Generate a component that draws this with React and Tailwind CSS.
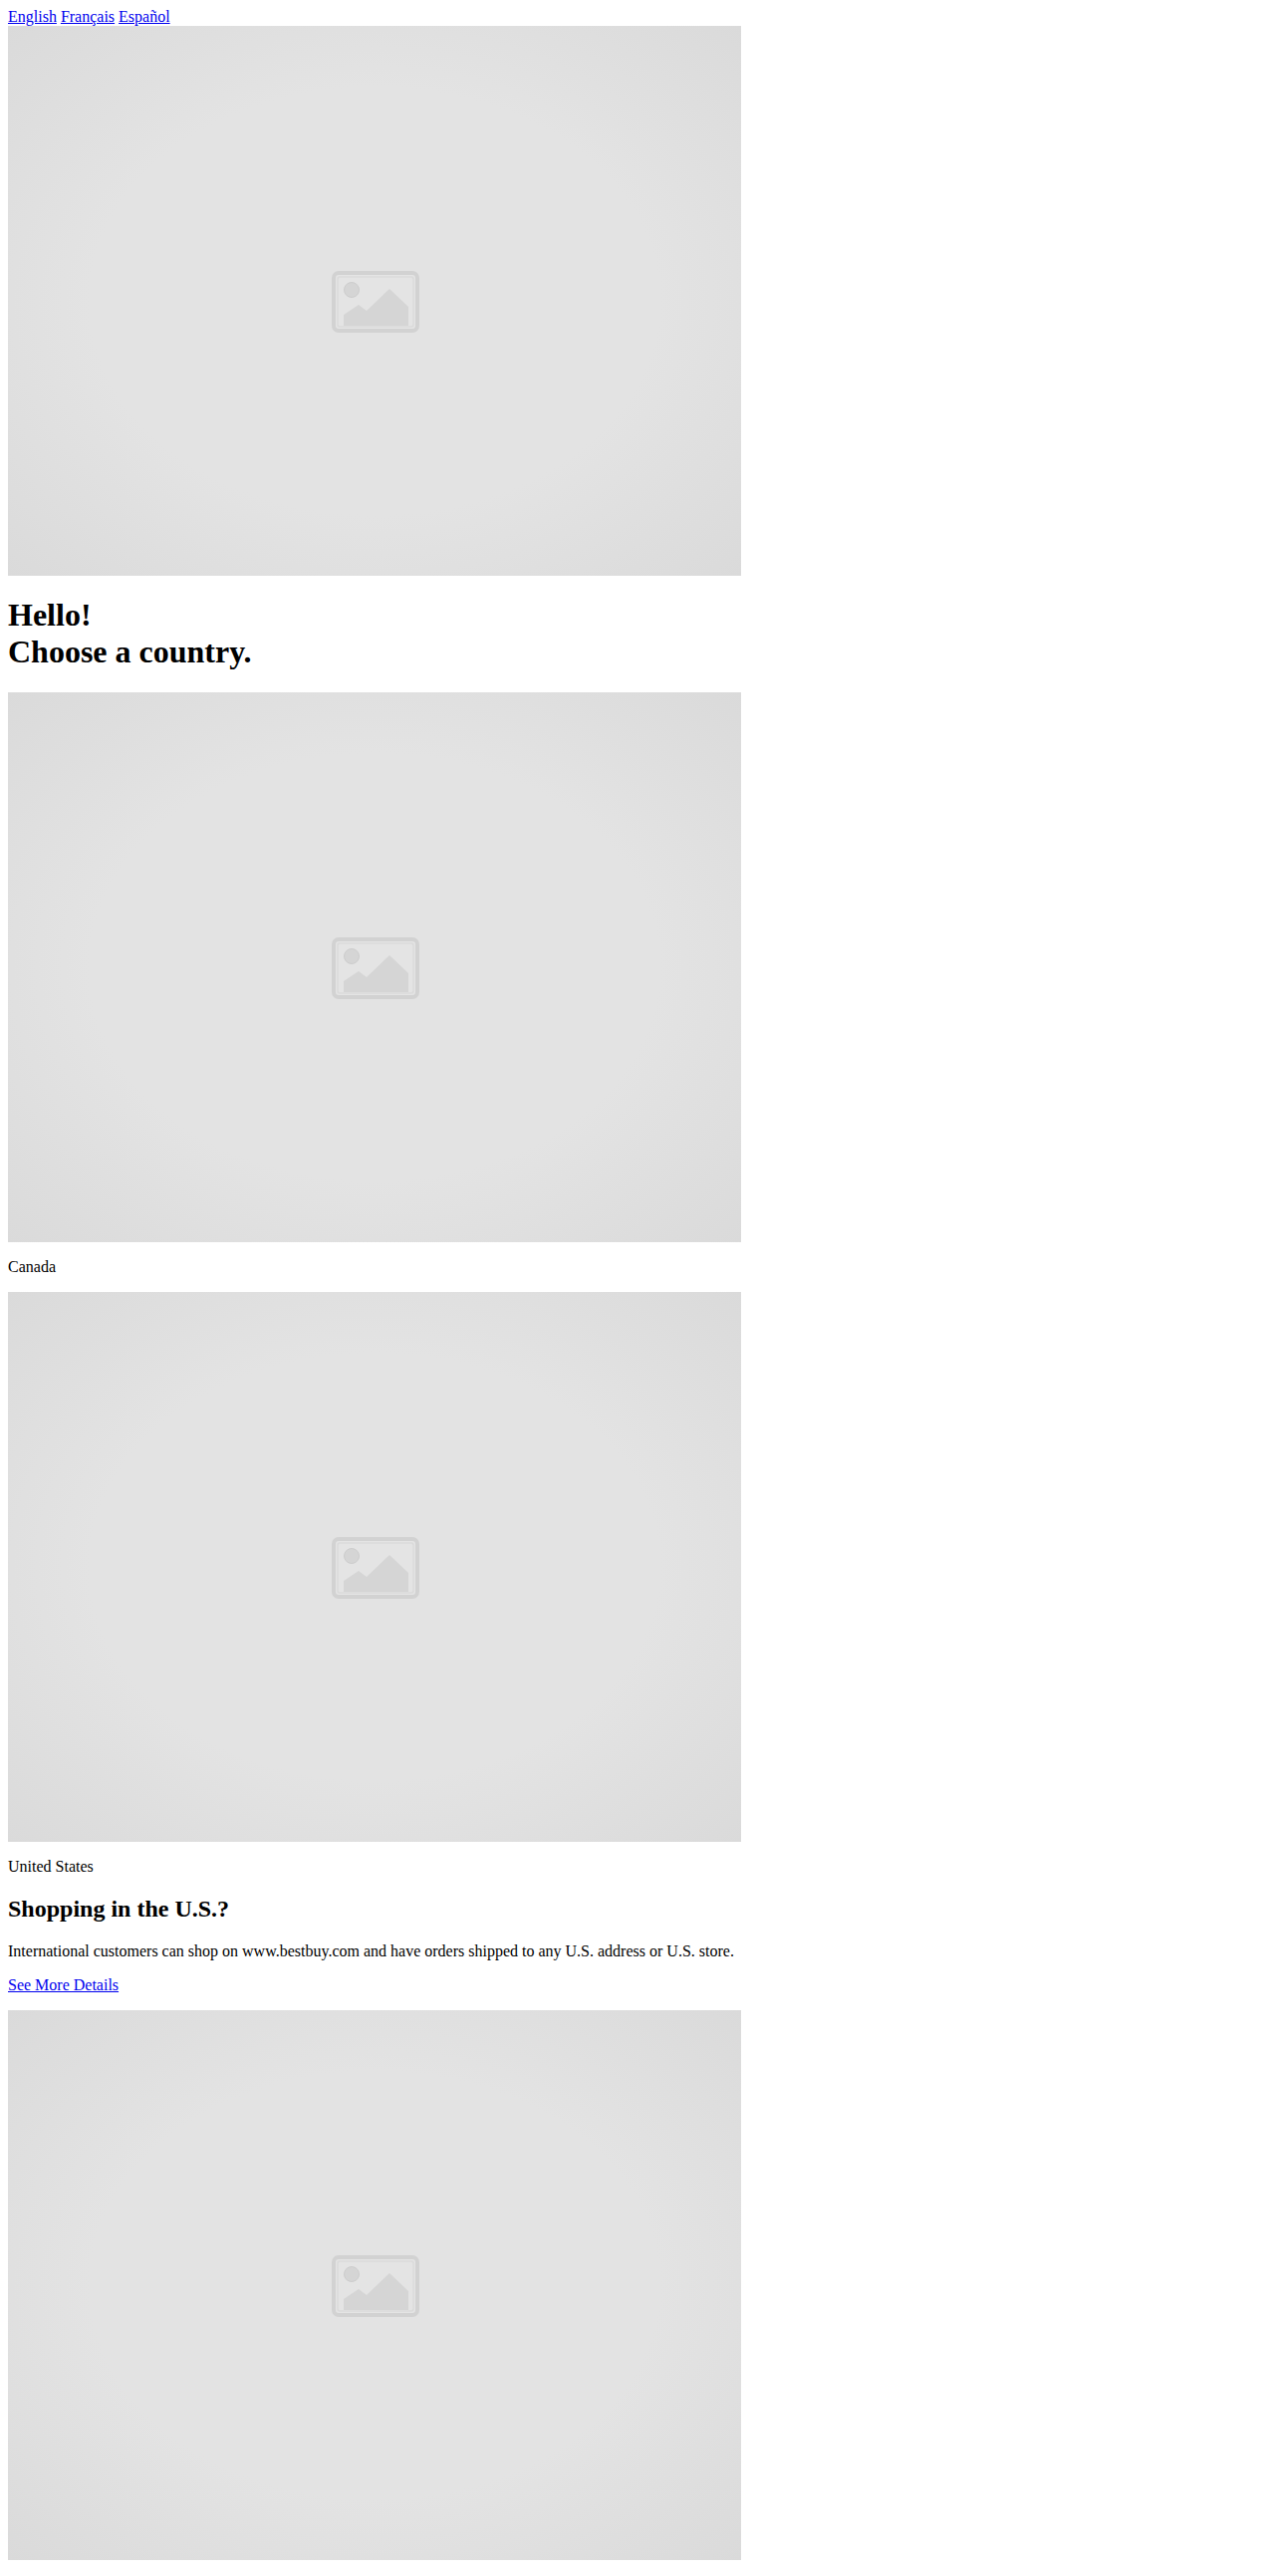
const countries = [
    { name: "Canada" },
    { name: "United States" },
]

function Placeholder() {
    return (
        <div className="w-[736px] h-[552px] flex items-center justify-center bg-[radial-gradient(ellipse_at_center,#e3e3e3_55%,#dadada_100%)]">
            <svg width="90" height="64" viewBox="0 0 90 64" className="ml-[3px] mt-[4px]">
                <rect x="2" y="2" width="84" height="58" rx="5" fill="#e4e4e4" stroke="#d2d2d2" strokeWidth="4" />
                <rect x="6" y="6" width="76" height="50" rx="2" fill="none" stroke="#dadada" strokeWidth="1.5" />
                <circle cx="20" cy="19" r="7.5" fill="#d5d5d5" stroke="#cdcdcd" strokeWidth="1" />
                <path d="M12 55 L12 44 L27 34 L35 40 L58 18 L77 36 L77 55 Z" fill="#d5d5d5" />
            </svg>
        </div>
    )
}

export default function App() {
    return (
        <div className="m-2 font-['Liberation_Serif',serif] text-[16px] leading-[normal] text-black bg-white">
            <div>
                <a href="#" className="text-[#0000ee] underline">English</a>{" "}
                <a href="#" className="text-[#0000ee] underline">Français</a>{" "}
                <a href="#" className="text-[#0000ee] underline">Español</a>
            </div>
            <Placeholder />

            <h1 className="text-[32px] font-bold leading-[normal] my-[21.44px]">
                Hello!<br />Choose a country.
            </h1>

            {countries.map(c => (
                <div key={c.name}>
                    <Placeholder />
                    <p className="my-4">{c.name}</p>
                </div>
            ))}

            <h2 className="text-[24px] font-bold leading-[normal] my-[19.92px]">Shopping in the U.S.?</h2>
            <p className="my-4">International customers can shop on www.bestbuy.com and have orders shipped to any U.S. address or U.S. store.</p>
            <p className="my-4">
                <a href="#" className="text-[#0000ee] underline">See More Details</a>
            </p>
            <Placeholder />
        </div>
    )
}
